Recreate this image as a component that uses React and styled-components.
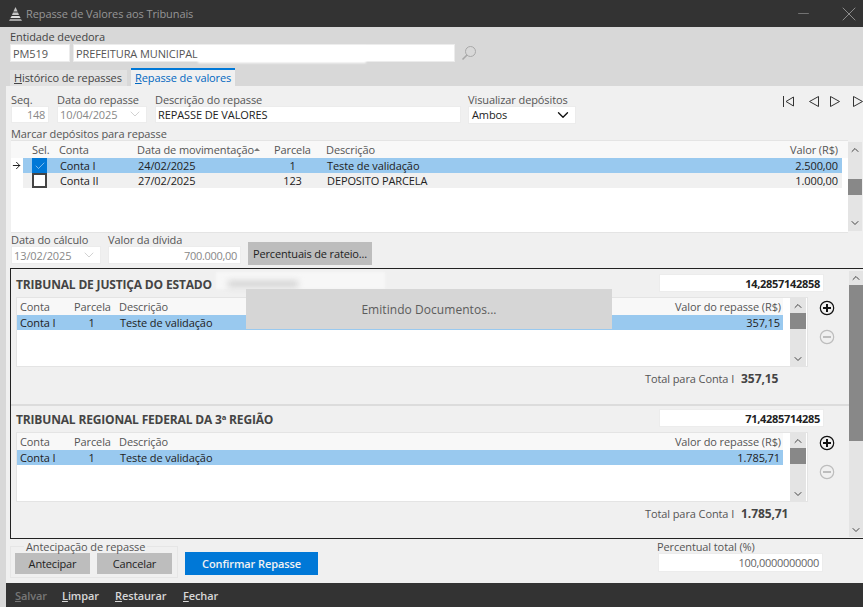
import React from "react";
import styled, { createGlobalStyle } from "styled-components";
import { ChevronDown, ChevronUp, ArrowRight, Check, Minus, X } from "lucide-react";

const GlobalStyle = createGlobalStyle`
  html, body { margin: 0; padding: 0; background: #d8d8d8; }
  * { box-sizing: border-box; }
  body { font-family: "Open Sans", "Noto Sans", sans-serif; font-size: 11px; letter-spacing: -0.1px; color: #222; }
`;

const Window = styled.div`
  position: relative;
  width: 863px;
  height: 607px;
  overflow: hidden;
  display: flex;
  flex-direction: column;
  background: #d8d8d8;
`;

const TitleBar = styled.div`
  height: 27px;
  flex: none;
  background: #333;
  display: flex;
  align-items: center;
  padding: 0 2px 0 8px;
  color: #969696;
`;

const TitleText = styled.span`
  margin-left: 3px;
  flex: 1;
`;

const WindowButton = styled.span`
  display: flex;
  color: #8c8c8c;
  margin-left: ${(p) => p.$gap || 0}px;
`;

const Header = styled.div`
  height: 42px;
  flex: none;
  padding: 4px 0 0 10px;
`;

const Label = styled.div`
  height: 12px;
  line-height: 12px;
  white-space: nowrap;
  color: ${(p) => p.$color || "#555"};
`;

const HeaderLabel = styled(Label)`
  margin-bottom: 1px;
  color: #444;
`;

const Row = styled.div`
  display: flex;
  align-items: center;
`;

const Input = styled.div`
  width: ${(p) => p.$w}px;
  height: ${(p) => p.$h || 18}px;
  margin-left: ${(p) => p.$ml || 0}px;
  background: #fff;
  border: 1px solid #ececec;
  display: flex;
  align-items: center;
  justify-content: ${(p) => (p.$right ? "flex-end" : "space-between")};
  padding: 0 3px 0 ${(p) => p.$pl ?? 2}px;
  color: ${(p) => p.$color || "#222"};
  font-weight: ${(p) => (p.$bold ? 700 : 400)};
  letter-spacing: ${(p) => (p.$right ? "-0.3px" : "inherit")};
  white-space: nowrap;
`;

const TopInput = styled(Input)`
  padding-bottom: 1px;
`;

const SearchGlyph = styled.svg`
  width: 16px;
  height: 16px;
  margin-left: 6px;
  fill: none;
  stroke: #a8a8a8;
`;

const Tabs = styled.div`
  height: 17px;
  flex: none;
  display: flex;
  align-items: flex-end;
  padding-left: 10px;
  gap: 4px;
`;

const Tab = styled.div`
  width: ${(p) => p.$w}px;
  height: ${(p) => (p.$active ? 18 : 16)}px;
  line-height: 15px;
  padding-left: 4px;
  background: ${(p) => (p.$active ? "#f0f0f0" : "#e2e2e2")};
  border-top: ${(p) => (p.$active ? "2px solid #0078d7" : "none")};
  color: ${(p) => (p.$active ? "#0067c0" : "#444")};
  u { text-underline-offset: 1px; }
`;

const Content = styled.div`
  flex: 1;
  min-height: 0;
  margin-left: 6px;
  background: #f0f0f0;
  display: flex;
  flex-direction: column;
`;

const TopFields = styled.div`
  display: flex;
  padding: 8px 0 0 5px;
  height: 37px;
  flex: none;
`;

const Field = styled.div`
  width: ${(p) => p.$w}px;
  margin-right: ${(p) => p.$mr || 0}px;
  flex: none;
`;

const CalcField = styled(Field)`
  margin-bottom: 1px;
`;

const Pager = styled.div`
  margin-left: 207px;
  display: flex;
  align-items: center;
  height: 14px;
  color: #333;
`;

const PagerIcon = styled.svg`
  width: 11px;
  height: 11px;
  flex: none;
  margin-left: ${(p) => p.$ml || 0}px;
  fill: none;
  stroke: currentColor;
  stroke-width: 1;
`;

const SectionLabel = styled(Label)`
  margin: 5px 0 0 5px;
  flex: none;
`;

const MainGridRow = styled.div`
  height: 93px;
  flex: none;
  display: flex;
  margin-left: 5px;
`;

const GridBox = styled.div`
  flex: none;
  width: ${(p) => p.$w}px;
  background: #fff;
  border-top: 1px solid #e4e4e4;
  border-bottom: 1px solid #e4e4e4;
`;

const MainHead = styled.div`
  display: grid;
  grid-template-columns: 12px 36px 78px 137px 52px 1fr 90px;
  height: 17px;
  line-height: 17px;
  color: #555;
  background: #f8f8f8;
  padding-right: 6px;
`;

const MainLine = styled.div`
  display: grid;
  grid-template-columns: 12px 36px 78px 137px 52px 1fr 90px;
  height: 15px;
  line-height: 15px;
  padding-right: 6px;
  color: #222;
`;

const LineCell = styled.div`
  background: ${(p) => p.$bg};
  padding-left: ${(p) => p.$pl || 0}px;
  padding-right: ${(p) => p.$pr || 0}px;
  text-align: ${(p) => p.$align || "left"};
  white-space: nowrap;
  display: ${(p) => (p.$flex ? "flex" : "block")};
  align-items: center;
`;

const SortMark = styled.span`
  display: inline-block;
  width: 0;
  height: 0;
  vertical-align: 3px;
  border-left: 3px solid transparent;
  border-right: 3px solid transparent;
  border-bottom: 3px solid #777;
`;

const CheckBox = styled.span`
  width: 15px;
  height: 15px;
  margin-left: 9px;
  display: flex;
  align-items: center;
  justify-content: center;
  color: #fff;
  background: ${(p) => (p.$on ? "#0078d7" : "#fff")};
  border: ${(p) => (p.$on ? "none" : "2px solid #444")};
`;

const Scroll = styled.div`
  flex: none;
  width: ${(p) => p.$w}px;
  height: ${(p) => p.$h}px;
  margin: ${(p) => p.$m || 0};
  background: #e4e4e4;
  display: flex;
  flex-direction: column;
  align-items: center;
  color: #444;
`;

const ScrollArrow = styled.div`
  height: ${(p) => p.$h}px;
  flex: none;
  display: flex;
  align-items: center;
  justify-content: center;
  margin-top: ${(p) => (p.$bottom ? "auto" : "0")};
`;

const ScrollThumb = styled.div`
  flex: none;
  width: 100%;
  height: ${(p) => p.$h}px;
  margin-top: ${(p) => p.$top || 0}px;
  background: #888;
`;

const CalcRow = styled.div`
  height: 32px;
  flex: none;
  display: flex;
  align-items: flex-end;
  padding-left: 5px;
`;

const GrayButton = styled.div`
  flex: none;
  width: ${(p) => p.$w}px;
  height: ${(p) => p.$h}px;
  margin-left: ${(p) => p.$ml || 0}px;
  background: #bdbdbd;
  color: #222;
  letter-spacing: -0.15px;
  display: flex;
  align-items: center;
  justify-content: center;
  white-space: nowrap;
`;

const Panel = styled.div`
  height: 271px;
  flex: none;
  margin: 3px 0 0 4px;
  border: 1px solid #222;
  border-right: none;
  padding-top: 2px;
  display: flex;
  overflow: hidden;
`;

const PanelBody = styled.div`
  flex: 1;
  min-width: 0;
  height: 270px;
  overflow: hidden;
`;

const Court = styled.div`
  height: 135px;
  border-bottom: 2px solid #dcdcdc;
  padding: 3px 0 0 5px;
`;

const CourtHead = styled.div`
  display: flex;
  align-items: center;
  height: 18px;
  padding-right: 25px;
`;

const CourtName = styled.div`
  flex: 1;
  padding-top: 2px;
  font-size: 12px;
  letter-spacing: -0.17px;
  font-weight: 700;
  color: #444;
  white-space: nowrap;
`;

const CourtBody = styled.div`
  display: flex;
  margin-top: 5px;
`;

const SubGrid = styled.div`
  width: 792px;
  height: 70px;
  background: #fff;
  border: 1px solid #e4e4e4;
  display: flex;
  flex: none;
  padding-right: 1px;
`;

const SubTable = styled.div`
  width: 766px;
  flex: none;
  margin-right: 7px;
`;

const SubHead = styled.div`
  display: grid;
  grid-template-columns: 57px 35px 1fr 140px;
  height: 17px;
  line-height: 18px;
  color: #555;
  background: #f8f8f8;
`;

const SubLine = styled.div`
  display: grid;
  grid-template-columns: 57px 35px 1fr 140px;
  height: 15px;
  line-height: 15px;
  background: #99c9ef;
  color: #222;
`;

const SubCell = styled.div`
  padding-left: ${(p) => p.$pl || 0}px;
  padding-right: ${(p) => p.$pr || 0}px;
  text-align: ${(p) => p.$align || "left"};
  white-space: nowrap;
`;

const RoundActions = styled.div`
  margin-left: 11px;
  padding-top: 3px;
  display: flex;
  flex-direction: column;
  gap: 13px;
`;

const RoundIcon = styled.svg`
  width: 16px;
  height: 16px;
  fill: none;
  stroke: ${(p) => p.$color};
`;

const TotalRow = styled.div`
  display: flex;
  align-items: baseline;
  padding-left: 629px;
  margin-top: 3px;
  color: #555;
`;

const TotalValue = styled.b`
  margin-left: 7px;
  font-size: 12px;
  color: #444;
`;

const BottomArea = styled.div`
  flex: 1;
  display: flex;
  padding-left: 4px;
  position: relative;
`;

const GroupBox = styled.div`
  position: relative;
  width: 168px;
  height: 32px;
  margin-top: 7px;
  border: 1px solid #e6e6e6;
  display: flex;
  align-items: flex-start;
  padding: 6px 0 0 4px;
  gap: 7px;
`;

const Legend = styled.div`
  position: absolute;
  left: 13px;
  top: -6px;
  padding: 0 2px;
  line-height: 12px;
  color: #555;
  background: #f0f0f0;
  white-space: nowrap;
`;

const PrimaryButton = styled.div`
  width: 133px;
  height: 23px;
  margin: 13px 0 0 7px;
  background: #0078d7;
  color: #f2f2f2;
  font-weight: 600;
  display: flex;
  align-items: center;
  justify-content: center;
`;

const TotalField = styled.div`
  margin: 2px 0 0 340px;
`;

const TotalLabel = styled(Label)`
  margin-left: -1px;
`;

const Footer = styled.div`
  height: 24px;
  flex: none;
  margin-left: 6px;
  background: #333;
  display: flex;
  align-items: center;
  padding-left: 9px;
  color: #d8d8d8;
`;

const FooterItem = styled.span`
  width: ${(p) => p.$w}px;
  color: ${(p) => (p.$disabled ? "#777" : "#d8d8d8")};
  font-weight: 600;
`;

const BusyNotice = styled.div`
  position: absolute;
  left: 246px;
  top: 289px;
  width: 366px;
  height: 40px;
  background: #d6d6d6;
  color: #5c5c5c;
  font-size: 12px;
  letter-spacing: 0.05px;
  display: flex;
  align-items: center;
  justify-content: center;
`;

const Smudge = styled.div`
  position: absolute;
  left: ${(p) => p.$x}px;
  top: ${(p) => p.$y}px;
  width: ${(p) => p.$w}px;
  height: ${(p) => p.$h}px;
  background: ${(p) => p.$bg};
  filter: blur(${(p) => p.$blur}px);
`;

const Logo = () => (
  <svg width="15" height="14" viewBox="0 0 15 14" fill="#c4c4c4">
    <path d="M7.500 0 9.600 4.500H5.400z" />
    <path d="M5 5.500h5l1 2.500H4z" />
    <path d="M3.600 9h7.800l1.200 2H2.400z" fill="#dedede" />
    <path d="M2 12h11l1 2H1z" fill="#a0a0a0" />
  </svg>
);

const SearchIcon = () => (
  <SearchGlyph viewBox="0 0 16 16">
    <circle cx="9.500" cy="6.500" r="5" />
    <path d="M6 10 1.500 14.500" strokeWidth="1.600" />
  </SearchGlyph>
);

const PlusIcon = () => (
  <RoundIcon viewBox="0 0 16 16" $color="#111">
    <circle cx="8" cy="8" r="6.700" strokeWidth="1.200" />
    <path d="M4 8h8M8 4v8" strokeWidth="2" />
  </RoundIcon>
);

const MinusIcon = () => (
  <RoundIcon viewBox="0 0 16 16" $color="#bdbdbd">
    <circle cx="8" cy="8" r="6.700" strokeWidth="1.200" />
    <path d="M4 8h8" strokeWidth="2" />
  </RoundIcon>
);

const PagerGlyph = ({ dir, bar, ml }) => (
  <PagerIcon viewBox="0 0 11 11" $ml={ml}>
    {bar && <path d="M.5 0v11M10.500 1 3 5.500l7.500 4.500z" />}
    {!bar && dir === "left" && <path d="M9.500.5.500 5.500l9 5z" />}
    {!bar && dir === "right" && <path d="M.5.5l9 5-9 5z" />}
  </PagerIcon>
);

const ScrollBar = ({ w, h, m, arrow, thumbTop, thumbH }) => (
  <Scroll $w={w} $h={h} $m={m}>
    <ScrollArrow $h={arrow}><ChevronUp size={12} strokeWidth={2} /></ScrollArrow>
    <ScrollThumb $top={thumbTop} $h={thumbH} />
    <ScrollArrow $h={arrow} $bottom><ChevronDown size={12} strokeWidth={2} /></ScrollArrow>
  </Scroll>
);

const deposits = [
  { conta: "Conta I", data: "24/02/2025", parcela: "1", desc: "Teste de validação", valor: "2.500,00", on: true },
  { conta: "Conta II", data: "27/02/2025", parcela: "123", desc: "DEPOSITO PARCELA", valor: "1.000,00", on: false },
];

const courts = [
  { name: "TRIBUNAL DE JUSTIÇA DO ESTADO", pct: "14,2857142858", valor: "357,15" },
  { name: "TRIBUNAL REGIONAL FEDERAL DA 3ª REGIÃO", pct: "71,4285714285", valor: "1.785,71" },
];

const App = () => {
  return (
    <Window>
      <GlobalStyle />
      <TitleBar>
        <Logo />
        <TitleText>Repasse de Valores aos Tribunais</TitleText>
        <WindowButton><Minus size={17} strokeWidth={1} /></WindowButton>
        <WindowButton $gap={25}><X size={24} strokeWidth={1} /></WindowButton>
      </TitleBar>

      <Header>
        <HeaderLabel>Entidade devedora</HeaderLabel>
        <Row>
          <Input $w={60} $color="#555">PM519</Input>
          <Input $w={382} $ml={3} $color="#555">PREFEITURA MUNICIPAL</Input>
          <SearchIcon />
        </Row>
      </Header>

      <Tabs>
        <Tab $w={117}><u>H</u>istórico de repasses</Tab>
        <Tab $w={104} $active><u>R</u>epasse de valores</Tab>
      </Tabs>

      <Content>
        <TopFields>
          <Field $w={38} $mr={8}>
            <Label>Seq.</Label>
            <TopInput $w={38} $h={17} $right $color="#888">148</TopInput>
          </Field>
          <Field $w={90} $mr={8}>
            <Label>Data do repasse</Label>
            <TopInput $w={90} $h={17} $color="#888">10/04/2025<ChevronDown size={16} strokeWidth={0.8} color="#aaa" /></TopInput>
          </Field>
          <Field $w={306} $mr={7}>
            <Label>Descrição do repasse</Label>
            <TopInput $w={306} $h={17}>REPASSE DE VALORES</TopInput>
          </Field>
          <Field $w={108}>
            <Label>Visualizar depósitos</Label>
            <TopInput $w={108} $h={18} $pl={3}>Ambos<ChevronDown size={18} strokeWidth={1.800} color="#111" /></TopInput>
          </Field>
          <Pager>
            <PagerGlyph dir="left" bar />
            <PagerGlyph dir="left" ml={15} />
            <PagerGlyph dir="right" ml={10} />
            <PagerGlyph dir="right" ml={12} />
          </Pager>
        </TopFields>

        <SectionLabel>Marcar depósitos para repasse</SectionLabel>
        <MainGridRow>
          <GridBox $w={837}>
            <MainHead>
              <span />
              <LineCell $pl={9}>Sel.</LineCell>
              <span>Conta</span>
              <span>Data de movimentação<SortMark /></span>
              <span>Parcela</span>
              <span>Descrição</span>
              <LineCell $align="right" $pr={4}>Valor (R$)</LineCell>
            </MainHead>
            {deposits.map((d) => {
              const bg = d.on ? "#99c9ef" : "#f0f0f0";
              return (
                <MainLine key={d.conta}>
                  <LineCell $flex>{d.on && <ArrowRight size={11} strokeWidth={2} color="#111" />}</LineCell>
                  <LineCell $bg={bg} $flex>
                    <CheckBox $on={d.on}>{d.on && <Check size={12} strokeWidth={1} />}</CheckBox>
                  </LineCell>
                  <LineCell $bg={bg} $pl={1}>{d.conta}</LineCell>
                  <LineCell $bg={bg} $pl={1}>{d.data}</LineCell>
                  <LineCell $bg={bg} $pr={15} $align="center">{d.parcela}</LineCell>
                  <LineCell $bg={bg} $pl={1}>{d.desc}</LineCell>
                  <LineCell $bg={bg} $align="right" $pr={4}>{d.valor}</LineCell>
                </MainLine>
              );
            })}
          </GridBox>
          <ScrollBar w={14} h={89} m="2px 0 0 0" arrow={16} thumbTop={21} thumbH={16} />
        </MainGridRow>

        <CalcRow>
          <CalcField $w={90} $mr={7}>
            <Label>Data do cálculo</Label>
            <Input $w={90} $color="#888">13/02/2025<ChevronDown size={16} strokeWidth={0.8} color="#aaa" /></Input>
          </CalcField>
          <CalcField $w={133}>
            <Label>Valor da dívida</Label>
            <Input $w={133} $right $color="#888">700.000,00</Input>
          </CalcField>
          <GrayButton $w={124} $h={23} $ml={7}>Percentuais de rateio...</GrayButton>
        </CalcRow>

        <Panel>
          <PanelBody>
            {courts.map((c) => (
              <Court key={c.name}>
                <CourtHead>
                  <CourtName>{c.name}</CourtName>
                  <Input $w={165} $right $bold>{c.pct}</Input>
                </CourtHead>
                <CourtBody>
                  <SubGrid>
                    <SubTable>
                      <SubHead>
                        <SubCell $pl={3}>Conta</SubCell>
                        <SubCell $align="center">Parcela</SubCell>
                        <SubCell $pl={10}>Descrição</SubCell>
                        <SubCell $align="right" $pr={2}>Valor do repasse (R$)</SubCell>
                      </SubHead>
                      <SubLine>
                        <SubCell $pl={3}>Conta I</SubCell>
                        <SubCell $align="center">1</SubCell>
                        <SubCell $pl={11}>Teste de validação</SubCell>
                        <SubCell $align="right" $pr={3}>{c.valor}</SubCell>
                      </SubLine>
                    </SubTable>
                    <ScrollBar w={16} h={68} arrow={15} thumbH={16} />
                  </SubGrid>
                  <RoundActions>
                    <PlusIcon />
                    <MinusIcon />
                  </RoundActions>
                </CourtBody>
                <TotalRow>Total para Conta I<TotalValue>{c.valor}</TotalValue></TotalRow>
              </Court>
            ))}
          </PanelBody>
          <ScrollBar w={14} h={266} arrow={14} thumbH={156} />
        </Panel>

        <BottomArea>
          <GroupBox>
            <Legend>Antecipação de repasse</Legend>
            <GrayButton $w={75} $h={21}>Antecipar</GrayButton>
            <GrayButton $w={75} $h={21}>Cancelar</GrayButton>
          </GroupBox>
          <PrimaryButton>Confirmar Repasse</PrimaryButton>
          <TotalField>
            <TotalLabel>Percentual total (%)</TotalLabel>
            <Input $w={165} $h={19} $right $color="#666">100,0000000000</Input>
          </TotalField>
        </BottomArea>
      </Content>

      <Footer>
        <FooterItem $w={47} $disabled><u>S</u>alvar</FooterItem>
        <FooterItem $w={53}><u>L</u>impar</FooterItem>
        <FooterItem $w={68}><u>R</u>estaurar</FooterItem>
        <FooterItem $w={50}><u>F</u>echar</FooterItem>
      </Footer>

      <Smudge $x={198} $y={46} $w={168} $h={17} $bg="#fff" $blur={1} />
      <Smudge $x={216} $y={272} $w={169} $h={17} $bg="#f7f7f7" $blur={1} />
      <Smudge $x={228} $y={281} $w={70} $h={6} $bg="#cfcfcf" $blur={3} />
      <BusyNotice>Emitindo Documentos...</BusyNotice>
    </Window>
  );
};

export default App;
